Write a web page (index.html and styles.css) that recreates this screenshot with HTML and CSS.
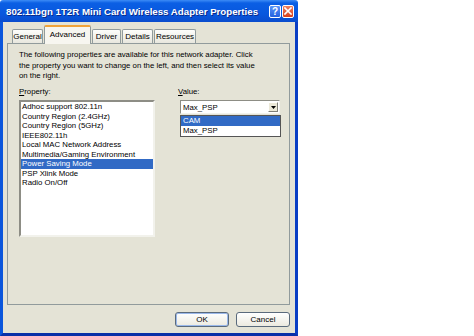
FILE: index.html
```html
<!DOCTYPE html>
<html lang="en">
<head>
    <meta charset="UTF-8">
    <title>802.11bgn 1T2R Mini Card Wireless Adapter Properties</title>
    <link rel="stylesheet" href="styles.css">
</head>
<body>

<div class="window">
    <div class="titlebar">
        <span class="title">802.11bgn 1T2R Mini Card Wireless Adapter Properties</span>
        <div class="caption-buttons">
            <span class="cap-btn help">?</span>
            <span class="cap-btn close">
                <svg width="8" height="8" viewBox="0 0 8 8">
                    <path d="M1 1 L7 7 M7 1 L1 7" stroke="#fff" stroke-width="1.6" stroke-linecap="square"/>
                </svg>
            </span>
        </div>
    </div>

    <div class="client">
        <!-- tabs -->
        <div class="tabs">
            <span class="tab">General</span>
            <span class="tab active">Advanced</span>
            <span class="tab">Driver</span>
            <span class="tab">Details</span>
            <span class="tab">Resources</span>
        </div>

        <div class="panel">
            <p class="intro">
                The following properties are available for this network adapter. Click<br>
                the property you want to change on the left, and then select its value<br>
                on the right.
            </p>

            <div class="fields">
                <div class="col-property">
                    <label class="field-label"><u>P</u>roperty:</label>
                    <ul class="listbox">
                        <li>Adhoc support 802.11n</li>
                        <li>Country Region (2.4GHz)</li>
                        <li>Country Region (5GHz)</li>
                        <li>IEEE802.11h</li>
                        <li>Local MAC Network Address</li>
                        <li>Multimedia/Gaming Environment</li>
                        <li class="selected">Power Saving Mode</li>
                        <li>PSP Xlink Mode</li>
                        <li>Radio On/Off</li>
                    </ul>
                </div>

                <div class="col-value">
                    <label class="field-label"><u>V</u>alue:</label>
                    <div class="combo">
                        <span class="combo-text">Max_PSP</span>
                        <span class="combo-btn">
                            <svg width="5" height="3" viewBox="0 0 5 3"><path d="M0 0 H5 L2.5 3 Z" fill="#000"/></svg>
                        </span>
                    </div>
                    <ul class="dropdown">
                        <li class="selected">CAM</li>
                        <li>Max_PSP</li>
                    </ul>
                </div>
            </div>
        </div>

        <div class="dialog-buttons">
            <button class="default">OK</button>
            <button>Cancel</button>
        </div>
    </div>
</div>

</body>
</html>
```

FILE: styles.css
```css
/* Windows XP style properties dialog */
body {
    margin: 0;
    background-color: #ffffff;
    font-family: "Liberation Sans", Arial, sans-serif;
    font-size: 7.8px;
    color: #000;
}
.window {
    width: 298px;
    height: 336px;
    display: flex;
    flex-direction: column;
}

/* title bar */
.titlebar {
    height: 22px;
    flex-shrink: 0;
    display: flex;
    align-items: center;
    justify-content: space-between;
    padding: 0 4px 0 6px;
    background: linear-gradient(#3d8cf6 0, #0b5fe4 3px, #0857de 14px, #0a4ccd 22px);
    border-radius: 3px 3px 0 0;
}
.title {
    color: white;
    font-weight: bold;
    font-size: 9.7px;
    white-space: nowrap;
    text-shadow: 1px 1px #0a2a8a;
}
.caption-buttons {
    display: flex;
    gap: 1px;
}
.cap-btn {
    width: 12px;
    height: 13px;
    box-sizing: border-box;
    border: 1px solid #ffffff;
    border-radius: 2px;
    display: flex;
    align-items: center;
    justify-content: center;
    color: white;
    font-weight: bold;
    font-size: 10px;
}
.help {
    background: linear-gradient(#5b95f7, #2260e0);
}
.close {
    background: linear-gradient(#ec8060, #d7401c);
}

/* client area */
.client {
    flex: 1;
    background-color: #e4e3d6;
    border-left: 3px solid #0b56dc;
    border-right: 3px solid #0a3ec4;
    border-bottom: 3px solid #0a30a8;
    padding: 3px 5px 0 4px;
    display: flex;
    flex-direction: column;
}

/* tabs */
.tabs {
    display: flex;
    align-items: flex-end;
    height: 19px;
    margin-left: 5px;
    margin-bottom: -1px;
    position: relative;
    z-index: 1;
}
.tab {
    height: 14px;
    box-sizing: border-box;
    margin-bottom: 1px;
    margin-right: 1px;
    padding: 0 2px;
    border: 1px solid #919b9c;
    border-bottom: none;
    border-radius: 2px 2px 0 0;
    background: linear-gradient(#fdfdfb, #e8e7de);
    display: flex;
    align-items: center;
    justify-content: center;
    font-size: 8px;
}
.tab:nth-child(1) { width: 31px; }
.tab:nth-child(3) { width: 29px; }
.tab:nth-child(4) { width: 31px; }
.tab:nth-child(5) { width: 42px; }
.tab.active {
    width: 47px;
    height: 19px;
    margin-bottom: 0;
    padding-bottom: 3px;
    border-top: 2px solid #f0a33a;
    background: #f7f6f0;
}

/* panel */
.panel {
    height: 262px;
    box-sizing: border-box;
    border: 1px solid #919b9c;
    padding: 6px 11px;
}
.intro {
    margin: 0;
    line-height: 10.5px;
}
.fields {
    display: flex;
    gap: 25px;
    margin-top: 5.5px;
}
.field-label {
    display: block;
    line-height: 10px;
    margin-bottom: 3px;
}
.col-value .field-label {
    margin-left: -2px;
}
.listbox {
    list-style: none;
    margin: 0;
    padding: 0;
    width: 136px;
    height: 137px;
    box-sizing: border-box;
    background: white;
    border: 2px solid;
    border-color: #8d8d85 #f2f2ec #f2f2ec #8d8d85;
}
.listbox li {
    line-height: 9.5px;
    padding-left: 1px;
    white-space: nowrap;
}
.selected {
    background-color: #316ac5;
    color: white;
}

/* combo box */
.combo {
    width: 100px;
    height: 14px;
    box-sizing: border-box;
    background: white;
    border: 1px solid;
    border-color: #8d8d85 #f2f2ec #f2f2ec #8d8d85;
    display: flex;
    align-items: center;
    justify-content: space-between;
    padding: 0 1px 0 2px;
}
.combo-btn {
    width: 10px;
    height: 10px;
    box-sizing: border-box;
    background: #ece9d8;
    border: 1px solid;
    border-color: #fff #7f7f78 #7f7f78 #fff;
    display: flex;
    align-items: center;
    justify-content: center;
}
.dropdown {
    list-style: none;
    margin: 1px 0 0;
    padding: 0;
    width: 101px;
    box-sizing: border-box;
    background: white;
    border: 1px solid #555;
}
.dropdown li {
    line-height: 10px;
    padding-left: 2px;
}

/* OK / Cancel */
.dialog-buttons {
    display: flex;
    justify-content: flex-end;
    gap: 7px;
    margin-top: 7px;
}
button {
    width: 54px;
    height: 15px;
    padding: 0;
    font-family: "Liberation Sans", Arial, sans-serif;
    font-size: 8px;
    border: 1px solid #5a6a7c;
    border-radius: 3px;
    background: linear-gradient(#ffffff, #eceae0);
}
button.default {
    box-shadow: inset 0 0 0 1px #9ab8ea;
}
```
